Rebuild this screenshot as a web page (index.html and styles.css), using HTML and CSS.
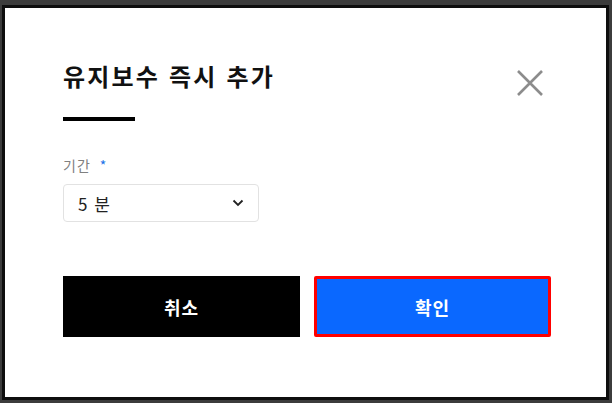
FILE: index.html
```html
<!DOCTYPE html>
<html lang="ko">
<head>
<meta charset="utf-8">
<link rel="stylesheet" href="styles.css">
</head>
<body>
<div class="frame">
  <div class="modal">
    <div class="head">
      <h1 class="title">유지보수 즉시 추가</h1>
      <button class="close" aria-label="닫기">
        <svg width="30" height="30" viewBox="0 0 30 30"><path d="M3 3 L27 27 M27 3 L3 27" stroke="#8c8c8c" stroke-width="2.6" fill="none"/></svg>
      </button>
    </div>
    <div class="bar"></div>
    <div class="field">
      <div class="label">기간 <span class="req">*</span></div>
      <div class="select">
        <span>5 분</span>
        <svg width="12" height="8" viewBox="0 0 12 8"><path d="M1.5 1.5 L6 6 L10.5 1.5" stroke="#222" stroke-width="1.8" fill="none"/></svg>
      </div>
    </div>
    <div class="actions">
      <button class="btn cancel">취소</button>
      <button class="btn ok">확인</button>
    </div>
  </div>
</div>
</body>
</html>
```
FILE: styles.css
```css
* { box-sizing: border-box; }
html, body { margin: 0; padding: 0; }
body {
  width: 612px;
  height: 403px;
  background: #3c3c3c;
  font-family: "Noto Sans CJK KR", "Noto Sans", sans-serif;
  overflow: hidden;
}
.frame {
  padding: 5px 3px 3px 2px;
  height: 403px;
}
.modal {
  background: #fff;
  border: 3px solid #0e0e0e;
  height: 395px;
  padding: 52px 55px 0 58px;
}
.head {
  display: flex;
  justify-content: space-between;
  align-items: flex-start;
}
.title {
  margin: 0;
  font-size: 24px;
  font-weight: 700;
  letter-spacing: 2.2px;
  color: #111;
  line-height: 32px;
}
.close {
  border: 0;
  background: none;
  padding: 0;
  margin: 8px 6px 0 0;
  width: 30px;
  height: 30px;
}
.bar {
  width: 72px;
  height: 4px;
  background: #000;
  margin-top: 19px;
}
.field { margin-top: 35px; }
.label {
  font-size: 14px;
  letter-spacing: 1px;
  color: #808080;
  line-height: 18px;
}
.req { color: #1a73e8; margin-left: 4px; }
.select {
  margin-top: 10px;
  width: 196px;
  height: 38px;
  border: 1px solid #e2e2e2;
  border-radius: 4px;
  display: flex;
  align-items: center;
  justify-content: space-between;
  padding: 0 14px 0 14px;
  font-size: 17px;
  letter-spacing: 1px;
  color: #222;
}
.actions {
  margin-top: 54px;
  display: flex;
  gap: 14px;
}
.btn {
  width: 237px;
  height: 61px;
  border: 0;
  font-family: inherit;
  font-size: 18px;
  font-weight: 700;
  letter-spacing: 1px;
  color: #fff;
  padding: 0;
}
.cancel { background: #000; }
.ok {
  background: #0a68ff;
  border: 3px solid #ff0000;
  border-radius: 2px;
}
```
